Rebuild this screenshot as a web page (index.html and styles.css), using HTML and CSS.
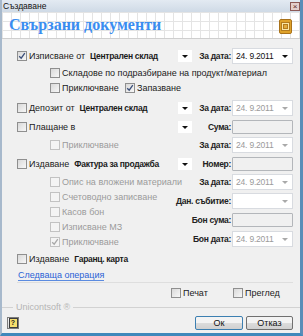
FILE: index.html
```html
<!DOCTYPE html>
<html lang="bg">
<head>
  <meta charset="UTF-8" />
  <title>Създаване</title>
  <link rel="stylesheet" href="styles.css">
</head>
<body>
  <div class="window">
    <div class="titlebar">
      <span>Създаване</span>
      <span class="close">×</span>
    </div>

    <div class="banner">
      <h1>Свързани документи</h1>
      <svg class="logo" width="13" height="15" viewBox="0 0 13 15">
        <rect x="0.5" y="0.5" width="12" height="14" rx="1.5" fill="#dfa22a" stroke="#a9721a" />
        <rect x="2.5" y="3.5" width="8" height="8" fill="#fbe7a6" stroke="#b37c1e" />
        <rect x="4.5" y="5.5" width="4" height="4" fill="#e2ab3c" stroke="#b37c1e" />
      </svg>
    </div>

    <div class="content">
      <!-- Изписване -->
      <div class="row">
        <label class="check"><span class="cb on"><svg viewBox="0 0 8 8"><path d="M1.2 4.2l2 2 3.6-5" /></svg></span>Изписване от <b>Централен склад</b></label>
        <span class="drop"><i></i></span>
        <span class="lbl">За дата:</span>
        <span class="date">24. 9.2011<i></i></span>
      </div>
      <div class="row sub first">
        <label class="check"><span class="cb"></span>Складове по подразбиране на продукт/материал</label>
      </div>
      <div class="row sub">
        <label class="check wide"><span class="cb"></span>Приключване</label>
        <label class="check"><span class="cb on"><svg viewBox="0 0 8 8"><path d="M1.2 4.2l2 2 3.6-5" /></svg></span>Запазване</label>
      </div>

      <!-- Депозит -->
      <div class="row gap5">
        <label class="check"><span class="cb"></span>Депозит от <b>Централен склад</b></label>
        <span class="drop"><i></i></span>
        <span class="lbl">За дата:</span>
        <span class="date off">24. 9.2011<i></i></span>
      </div>

      <!-- Плащане -->
      <div class="row gap3">
        <label class="check"><span class="cb"></span>Плащане в</label>
        <span class="drop"><i></i></span>
        <span class="lbl">Сума:</span>
        <span class="inp"></span>
      </div>
      <div class="row gap2">
        <label class="check dis sub-item"><span class="cb"></span>Приключване</label>
        <span></span>
        <span class="lbl">За дата:</span>
        <span class="date off">24. 9.2011<i></i></span>
      </div>

      <!-- Издаване -->
      <div class="row gap3">
        <label class="check"><span class="cb"></span>Издаване <b>Фактура за продажба</b></label>
        <span class="drop"><i></i></span>
        <span class="lbl">Номер:</span>
        <span class="inp"></span>
      </div>
      <div class="split">
        <div class="list">
          <label class="check dis"><span class="cb"></span>Опис на вложени материали</label>
          <label class="check dis"><span class="cb"></span>Счетоводно записване</label>
          <label class="check dis"><span class="cb"></span>Касов бон</label>
          <label class="check dis"><span class="cb"></span>Изписване МЗ</label>
          <label class="check dis"><span class="cb on"><svg viewBox="0 0 8 8"><path d="M1.2 4.2l2 2 3.6-5" /></svg></span>Приключване</label>
        </div>
        <div class="fields">
          <span class="lbl">За дата:</span>
          <span class="date off">24. 9.2011<i></i></span>
          <span class="lbl">Дан. събитие:</span>
          <span class="date off"><i></i></span>
          <span class="lbl">Бон сума:</span>
          <span class="inp"></span>
          <span class="lbl">Бон дата:</span>
          <span class="date off">24. 9.2011<i></i></span>
        </div>
      </div>

      <div class="row gap2">
        <label class="check"><span class="cb"></span>Издаване <b>Гаранц. карта</b></label>
      </div>

      <div class="link-row">
        <a href="#" class="link">Следваща операция</a>
      </div>

      <div class="print-row">
        <label class="check"><span class="cb"></span>Печат</label>
        <label class="check"><span class="cb"></span>Преглед</label>
      </div>
    </div>

    <div class="brand">Unicontsoft ®</div>

    <div class="buttons">
      <span class="help"><span class="q">?</span></span>
      <button class="btn default">Ок</button>
      <button class="btn">Отказ</button>
    </div>
  </div>
</body>
</html>
```

FILE: styles.css
```css
body {
  margin: 0;
  font-family: "Liberation Sans", Arial, sans-serif;
  font-size: 9px;
  color: #1b1b1b;
}

.window {
  width: 303px;
  height: 336px;
  box-sizing: border-box;
  display: flex;
  flex-direction: column;
  background: #f0f0f0;
  border-left: 2px solid #a7b9cc;
  border-right: 3px solid #5a8db8;
  border-bottom: 3px solid #3f88bb;
}

/* Title bar */
.titlebar {
  height: 12px;
  display: flex;
  align-items: center;
  justify-content: space-between;
  padding: 0 0 0 1px;
  background: linear-gradient(#e3eaf2, #cfdae6);
  font-size: 8.5px;
  color: #111;
}

.close {
  width: 8px;
  height: 7px;
  border: 1px solid #8c5a56;
  background: #e4cfcc;
  font-size: 8px;
  line-height: 7px;
  text-align: center;
  color: #5a2b28;
}

/* Banner */
.banner {
  height: 26px;
  display: flex;
  align-items: center;
  justify-content: space-between;
  padding: 0 8px 0 7px;
  background-color: #fff;
  background-image:
    linear-gradient(#e4e4e4 1px, transparent 1px),
    linear-gradient(90deg, #e4e4e4 1px, transparent 1px);
  background-size: 9px 9px;
  border-bottom: 1px solid #cfcfcf;
}

h1 {
  margin: 0;
  font-family: "Liberation Serif", "Times New Roman", serif;
  font-size: 16px;
  font-weight: bold;
  color: #3a8df0;
}

.logo {
  margin-top: 2px;
}

/* Form body */
.content {
  padding: 9px 7px 0 15px;
}

.row {
  display: grid;
  grid-template-columns: 161px 14px 40px 61px;
  align-items: center;
  height: 16px;
}

.row.sub {
  display: flex;
  height: 15px;
  padding-left: 33px;
}
.row.first { margin-top: 1px; }
.gap2 { margin-top: 2px; }
.gap3 { margin-top: 3px; }
.gap5 { margin-top: 5px; }

.check {
  display: flex;
  align-items: center;
  gap: 2px;
  white-space: nowrap;
}
.check.wide { width: 75px; }
.check.sub-item { padding-left: 33px; }
.check b {
  margin-left: 3px;
  font-size: 8.5px;
  letter-spacing: -0.3px;
}

.cb {
  width: 10px;
  height: 10px;
  box-sizing: border-box;
  border: 1px solid #8f8f8f;
  background: linear-gradient(135deg, #d9d9d9, #f7f7f7);
  display: flex;
  align-items: center;
  justify-content: center;
}
.cb svg {
  width: 8px;
  height: 8px;
  fill: none;
  stroke: #3b4f7a;
  stroke-width: 1.3;
}

.dis { color: #9b9b9b; }
.dis .cb {
  border-color: #c2c2c2;
  background: #f4f4f4;
}
.dis .cb svg { stroke: #a8a8a8; }

.drop {
  width: 14px;
  height: 12px;
  background: #fff;
  display: flex;
  align-items: center;
  justify-content: center;
}
.drop i,
.date i {
  width: 0;
  height: 0;
  border-left: 3px solid transparent;
  border-right: 3px solid transparent;
  border-top: 3px solid #111;
}

.lbl {
  display: flex;
  justify-content: flex-end;
  padding-right: 1px;
  white-space: nowrap;
  font-weight: bold;
  font-size: 8.5px;
  letter-spacing: -0.3px;
  color: #222;
}

.date {
  height: 16px;
  box-sizing: border-box;
  display: flex;
  align-items: center;
  justify-content: space-between;
  padding: 0 4px 0 3px;
  background: #fff;
  border: 1px solid #d8dbe0;
  font-size: 8.5px;
  letter-spacing: -0.2px;
  color: #111;
}
.date.off { color: #9a9a9a; }
.date.off i { border-top-color: #a9a9a9; }
.date i:only-child { margin-left: auto; }

.inp {
  height: 14px;
  box-sizing: border-box;
  background: #f0f0f0;
  border: 1px solid #b3b6ba;
  border-radius: 1px;
}

/* Фактура section */
.split {
  display: grid;
  grid-template-columns: 175px 101px;
  margin-top: 2px;
}
.list {
  display: flex;
  flex-direction: column;
  padding-left: 33px;
}
.list .check { height: 15px; }
.fields {
  display: grid;
  grid-template-columns: 40px 61px;
  grid-auto-rows: 16px;
  row-gap: 3px;
  align-items: center;
}

.link-row {
  margin-top: 3px;
  height: 12px;
  line-height: 11px;
  border-bottom: 1px solid #dedede;
  padding-left: 1px;
}
.link {
  color: #2a62d6;
  text-decoration: none;
  border-bottom: 1px solid #5b8be0;
}

.print-row {
  display: flex;
  height: 12px;
  margin-top: 4px;
  padding-left: 154px;
  align-items: center;
}
.print-row .check:first-child { width: 62px; }

/* Footer */
.brand {
  display: flex;
  align-items: center;
  gap: 3px;
  height: 10px;
  margin-top: 3px;
  color: #b5b5b5;
}
.brand::before,
.brand::after {
  content: "";
  height: 1px;
  background: #d2d2d2;
}
.brand::before { width: 11px; }
.brand::after { flex: 1; }

.buttons {
  display: flex;
  align-items: center;
  gap: 3px;
  margin-top: 4px;
  padding: 0 7px 0 5px;
}

.help {
  width: 12px;
  height: 12px;
  box-sizing: border-box;
  border: 1px solid #7c7c7c;
  background: linear-gradient(#f6f6f6, #d8d8d8);
  display: flex;
  align-items: center;
  justify-content: center;
  margin-right: auto;
}
.help .q {
  width: 7px;
  height: 8px;
  background: #f6df6e;
  border: 1px solid #3d3d3d;
  font-size: 7px;
  font-weight: bold;
  line-height: 8px;
  text-align: center;
}

.btn {
  height: 14px;
  padding: 0;
  font-family: "Liberation Sans", Arial, sans-serif;
  font-size: 9px;
  color: #111;
  border: 1px solid #707070;
  border-radius: 2px;
  background: linear-gradient(#f3f3f3 50%, #dcdcdc 50%, #d0d0d0);
}
.btn.default {
  width: 48px;
  border-color: #3c7fb1;
}
.btn:last-child { width: 47px; }
```
